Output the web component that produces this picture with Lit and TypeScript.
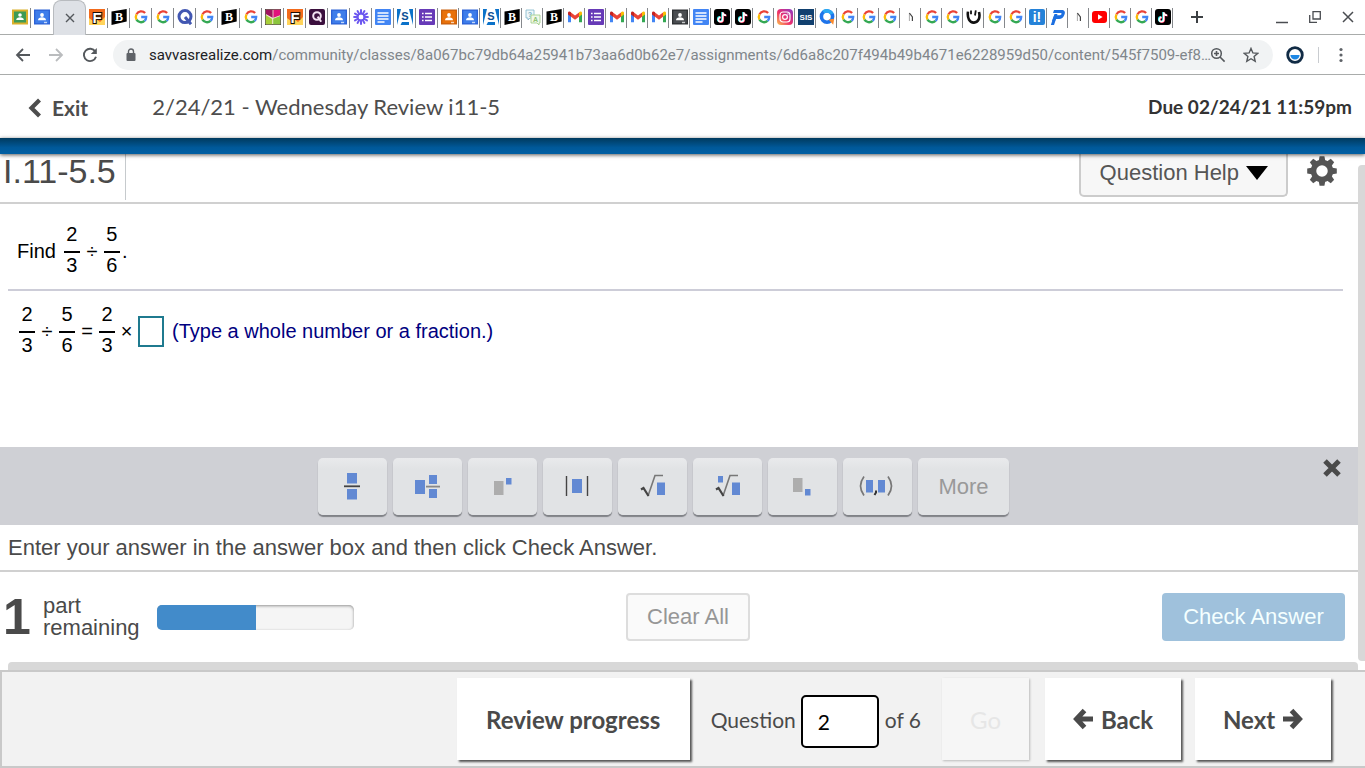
import { LitElement, html, css, svg } from "lit";
import { customElement, state } from "lit/decorators.js";
import { classMap } from "lit/directives/class-map.js";

const classroom = (frame: string, fill: string) => svg`
  <rect width="16" height="15" y=".5" fill=${frame}/>
  <rect x="1.3" y="1.8" width="13.4" height="12.4" fill=${fill}/>
  <circle cx="8" cy="6" r="1.9" fill="#fff"/>
  <path d="M4 11.2c0-2 2-2.9 4-2.9s4 .9 4 2.9z" fill="#fff"/>
  <rect x="10" y="12.8" width="3" height="1.4" fill="#fff" opacity=".7"/>`;

const ICONS: Record<string, unknown> = {
  classroom: svg`<rect width="16" height="15" y=".5" fill="#d9b02b"/><rect x="2" y="2.5" width="12" height="11" fill="#3f9a55"/>
    <circle cx="8" cy="6" r="1.8" fill="#fff"/><path d="M4.2 11c0-2 1.8-2.8 3.8-2.8s3.8.8 3.8 2.8z" fill="#fff"/>`,
  people: classroom("#2c62d6", "#3e7dea"),
  orange: classroom("#c9600c", "#e8710a"),
  dark: classroom("#2e3134", "#4a4d51"),
  flame: svg`<rect width="16" height="16" fill="#f26a1b"/><path d="M0 16V9l4 3 3-2 4 3 5-5v8z" fill="#ffd35a"/>
    <text x="8" y="13.5" class="glyph" text-anchor="middle" font-size="15" fill="#fff" stroke="#1b0d05" stroke-width="2" paint-order="stroke">F</text>`,
  brain: svg`<path d="M.5 2.6 15.7 0v12.6L.5 16z" fill="#000"/>
    <text x="8" y="12" class="serif" text-anchor="middle" font-size="12" fill="#fff">B</text>`,
  google: svg`<g fill="none" stroke-width="2.3">
    <path d="M12.1 4A5.2 5.2 0 0 0 3.5 5.4" stroke="#ea4335"/>
    <path d="M3.5 5.4a5.2 5.2 0 0 0 0 5.2" stroke="#fbbc05"/>
    <path d="M3.5 10.6a5.2 5.2 0 0 0 8 1.3" stroke="#34a853"/>
    <path d="M11.5 11.9A5.2 5.2 0 0 0 13.2 8H8.2" stroke="#4285f4"/></g>`,
  quizlet: svg`<circle cx="8" cy="7.6" r="6" fill="none" stroke="#4257b2" stroke-width="3"/><path d="m8 8 6 7.2" stroke="#4257b2" stroke-width="3"/>`,
  nearpod: svg`<rect width="16" height="16" fill="#4a4436"/><rect x=".8" y=".8" width="14.4" height="14.4" fill="#f3ead8"/><path d="M.8.8h6.8v8L.8 5z" fill="#a01560"/><path d="M8.400.8h6.800v5.400L8.400 8.800z" fill="#e2127c"/><path d="m.8 6 6.400 4v5.200H.8z" fill="#a8cf3a"/><path d="m8.200 9.800 7-2.800v8.200h-7z" fill="#8cc63e"/>`,
  quizizz: svg`<rect width="16" height="16" rx="2" fill="#3b0f3d"/><circle cx="8" cy="7" r="3.8" fill="none" stroke="#f3e3f2" stroke-width="2"/><path d="m8.6 7.6 3.6 5.2" stroke="#f3e3f2" stroke-width="2"/>`,
  burst: svg`<g stroke="#6d58f0" stroke-width="2" stroke-linecap="round">${[0, 30, 60, 90, 120, 150, 180, 210, 240, 270, 300, 330].map(
    (a) => svg`<path d="M8 4.6V1.1" transform="rotate(${a} 8 8)"/>`)}</g><circle cx="8" cy="8" r="3.2" fill="none" stroke="#6d58f0" stroke-width="1.4"/>`,
  docs: svg`<rect width="16" height="16" rx="1" fill="#4285f4"/><path d="M2.5 4h11M2.5 7h11M2.5 10h11M2.5 13h7" stroke="#fff" stroke-width="1.4"/>`,
  savvas: svg`<rect width="16" height="16" fill="#0b72c9"/><path d="M4 0h8l4 16h-4v-3H5l-1.5 3H0z" fill="#fff"/>
    <text x="8" y="11.4" class="glyph" text-anchor="middle" font-size="11" fill="#0a4f96">S</text>`,
  forms: svg`<rect width="16" height="16" rx="1" fill="#673ab7"/><path d="M3 4.5h1.6M3 8h1.6M3 11.5h1.6M6 4.5h7M6 8h7M6 11.5h7" stroke="#fff" stroke-width="1.5"/>`,
  talk: svg`<path d="M1 1h8v8H5l-2 2V9H1z" fill="#eef7fa" stroke="#7fb5c9" stroke-width=".8"/><path d="M6 6h9v8h-1v2l-2-2H6z" fill="#f0f8ea" stroke="#9ccc84" stroke-width=".8"/>
    <text x="5" y="7.6" class="glyph" text-anchor="middle" font-size="7" fill="#79b2c6">?</text><text x="10.6" y="13" class="glyph" text-anchor="middle" font-size="7" fill="#8fc274">A</text>`,
  gmail: svg`<path d="M1 4v9.3h3V7z" fill="#4285f4"/><path d="M15 4v9.3h-3V7z" fill="#34a853"/><path d="M4 3.4v4.4l4 3 4-3V3.4l-4 3z" fill="#ea4335"/><path d="M1 4c0-1.8 1.8-2 3-.8v4.6L1 5.6z" fill="#c5221f"/><path d="M15 4c0-1.8-1.8-2-3-.8v4.6l3-2.2z" fill="#fbbc04"/>`,
  tiktok: svg`<rect width="16" height="16" rx="3" fill="#000"/><g fill="none" stroke-width="1.8"><path d="M8.2 3v7.2a2.2 2.2 0 1 1-2.2-2.2M8.2 3c.2 1.8 1.6 3 3.4 3" stroke="#25f4ee"/><path d="M9.2 3.6v7.2a2.2 2.2 0 1 1-2.2-2.2M9.2 3.6c.2 1.8 1.6 3 3.4 3" stroke="#fe2c55"/><path d="M8.7 3.3v7.2a2.2 2.2 0 1 1-2.2-2.2M8.7 3.3c.2 1.8 1.6 3 3.4 3" stroke="#fff" stroke-width="1.6"/></g>`,
  instagram: svg`<defs><linearGradient id="ig" x1="0" y1="1" x2="1" y2="0"><stop offset="0" stop-color="#fdc44f"/><stop offset=".45" stop-color="#ee2f6b"/><stop offset="1" stop-color="#8a3ac8"/></linearGradient></defs>
    <rect width="16" height="16" rx="4" fill="url(#ig)"/><rect x="3" y="3" width="10" height="10" rx="3" fill="none" stroke="#fff" stroke-width="1.2"/><circle cx="8" cy="8" r="2.4" fill="none" stroke="#fff" stroke-width="1.2"/><circle cx="11" cy="5" r=".7" fill="#fff"/>`,
  sis: svg`<rect width="16" height="16" fill="#11406f"/><text x="8" y="10.8" class="glyph" text-anchor="middle" font-size="8" fill="#fff">SIS</text>`,
  lens: svg`<circle cx="8" cy="7.6" r="5.6" fill="none" stroke="#1e74ea" stroke-width="3.6"/><path d="M4.4 3A5.6 5.6 0 0 1 13 5" fill="none" stroke="#2aa8f2" stroke-width="3.6"/><path d="m9.6 10.4 5.6-.6-1 6z" fill="#fb8a2c"/>`,
  note: svg`<path d="M6.400 4v8" stroke="#aaa" stroke-width="1"/><path d="m6.400 4 3 4v4" fill="none" stroke="#444" stroke-width="1.2"/>`,
  face: svg`<path d="M2 2.6C1 9 3.6 13.8 8 13.6c4.6-.2 6.4-5 5-10.6" fill="none" stroke="#111" stroke-width="2.6"/><path d="M5 1.6v3.6M9.8 1.4 9 6.5" fill="none" stroke="#111" stroke-width="1.8"/>`,
  iready: svg`<rect width="16" height="16" rx="2" fill="#2582d8"/><text x="8" y="13" class="glyph" text-anchor="middle" font-size="14" fill="#fff">i!</text>`,
  paypal: svg`<path d="M4 1h7.5c3 0 4 2 3 4.5-1 3.2-3 4.5-5.5 4.5H6l-2 6H.8L4.2 6.2H10c.8 0 1.3-.6 1.5-1.2.2-.7-.3-1-.9-1H3z" fill="#1c6fe0"/><path d="M4.5 5h3L5 12H2z" fill="#1c6fe0"/>`,
  youtube: svg`<rect x="0" y="2" width="15" height="12" rx="3" fill="#f00"/><path d="M6 5.2v5.6L10.6 8z" fill="#fff"/>`,
};

const LEADING = ["classroom", "people"];
const WIDE = "flame brain google google quizlet google brain google nearpod flame quizizz people burst docs savvas forms".split(" ");
const NARROW = ("orange people savvas brain talk brain gmail forms gmail gmail gmail dark docs tiktok tiktok google instagram sis lens " +
  "google google google note google google face google google iready paypal note youtube google google tiktok").split(" ");

@customElement("browser-chrome")
class BrowserChrome extends LitElement {
  static styles = css`
    :host { display: block; font-family: Roboto, "Liberation Sans", sans-serif; }
    button { border: 0; padding: 0; background: none; color: inherit; font: inherit; display: grid; place-items: center; flex: none; }
    svg { display: block; }
    .strip { display: flex; height: 34px; padding-left: 9px; border-bottom: 1px solid #a9acab; background: #fff; }
    .tab { width: 22px; height: 34px; position: relative; }
    .tab::after { content: ""; position: absolute; right: 0; top: 8px; bottom: 6px; width: 1px; background: #85888c; }
    .tab.narrow { width: 21px; }
    .tab.bare::after { content: none; }
    .current { width: 33px; height: 35px; background: #dee1e6; border-radius: 8px 8px 0 0; border: 1px solid #b8bbbf; border-bottom: 0; }
    .add { width: 48px; }
    .window { display: flex; margin-left: auto; padding-right: 8px; gap: 15px; }
    .window button { width: 18px; }
    .glyph { font-family: "Liberation Sans", sans-serif; font-weight: 700; }
    .serif { font-family: "Liberation Serif", serif; font-weight: 700; }
    .bar { display: flex; align-items: center; height: 39px; border-bottom: 1px solid #a9acab; padding: 0 15px; color: #5f6368; }
    .nav { display: flex; gap: 17px; margin-right: 14px; }
    .omni { display: flex; align-items: center; flex: 1; min-width: 0; height: 30px; border-radius: 15px; background: #f1f3f4; padding: 0 14px 0 12px; }
    .url { flex: 1; min-width: 0; white-space: nowrap; margin-left: 12px; font-size: 15px; line-height: 30px; color: #80868b; }
    .host { color: #202124; }
    .star { margin-left: 17px; }
    .ext { margin-left: 13px; }
    .rule { width: 1px; height: 16px; background: #c9ccd0; margin: 0 13px 0 14px; }
  `;

  private tab(name: string, narrow = false, bare = false) {
    return html`<button class=${classMap({ tab: true, narrow, bare })} aria-label=${name}>
      <svg width="16" height="16" viewBox="0 0 16 16">${ICONS[name]}</svg></button>`;
  }

  render() {
    return html`
      <div class="strip">
        ${LEADING.map((n, i) => this.tab(n, false, i === 1))}
        <button class="current" aria-label="Close tab"><svg width="10" height="10" viewBox="0 0 10 10"><path d="m1 1 8 8M9 1 1 9" stroke="#54585c" stroke-width="1.4"/></svg></button>
        ${WIDE.map((n) => this.tab(n))}
        ${NARROW.map((n) => this.tab(n, true))}
        <button class="add" aria-label="New tab"><svg width="14" height="14" viewBox="0 0 14 14"><path d="M7 1v12M1 7h12" stroke="#3c4043" stroke-width="2"/></svg></button>
        <div class="window">
          <button aria-label="Minimize"><svg width="12" height="14" viewBox="0 0 12 14"><path d="M0 12.5h12" stroke="#4a4d51" stroke-width="1.5"/></svg></button>
          <button aria-label="Restore"><svg width="12" height="12" viewBox="0 0 12 12"><path d="M4 .7h7.3v7.3H4zM.7 4v7.3H8" fill="none" stroke="#4a4d51" stroke-width="1.3"/></svg></button>
          <button aria-label="Close window"><svg width="12" height="12" viewBox="0 0 12 12"><path d="m1 1 10 10M11 1 1 11" stroke="#4a4d51" stroke-width="1.5"/></svg></button>
        </div>
      </div>
      <div class="bar">
        <div class="nav">
          <button aria-label="Back"><svg width="16" height="16" viewBox="0 0 16 16"><path d="M15 8H2.5M8 2 2 8l6 6" fill="none" stroke="#54585c" stroke-width="1.8"/></svg></button>
          <button aria-label="Forward" disabled><svg width="16" height="16" viewBox="0 0 16 16"><path d="M1 8h12.5M8 2l6 6-6 6" fill="none" stroke="#babcbe" stroke-width="1.8"/></svg></button>
          <button aria-label="Reload"><svg width="18" height="16" viewBox="0 0 18 16"><path d="M14.3 4.5A6.2 6.2 0 1 0 15 9.8" fill="none" stroke="#54585c" stroke-width="1.9"/><path d="M15.8 1v6H9.8z" fill="#54585c"/></svg></button>
        </div>
        <div class="omni">
          <svg width="12" height="14" viewBox="0 0 12 14"><rect x="1.5" y="5" width="9" height="8" rx="1" fill="#5f6368"/><path d="M3.5 5V3.5a2.5 2.5 0 0 1 5 0V5" fill="none" stroke="#5f6368" stroke-width="1.4"/></svg>
          <div class="url"><span class="host">savvasrealize.com</span>/community/classes/8a067bc79db64a25941b73aa6d0b62e7/assignments/6d6a8c207f494b49b4671e6228959d50/content/545f7509-ef8…</div>
          <button aria-label="Zoom"><svg width="16" height="16" viewBox="0 0 16 16"><circle cx="6.5" cy="6.5" r="4.8" fill="none" stroke="#54585c" stroke-width="1.5"/><path d="m10 10 4.6 4.6M4 6.5h5M6.5 4v5" stroke="#54585c" stroke-width="1.6"/></svg></button>
          <button class="star" aria-label="Bookmark"><svg width="16" height="16" viewBox="0 0 16 16"><path d="m8 1.4 1.9 4.5 4.9.4-3.7 3.2 1.1 4.8L8 11.7l-4.2 2.6 1.1-4.8-3.7-3.2 4.9-.4z" fill="none" stroke="#54585c" stroke-width="1.4"/></svg></button>
        </div>
        <button class="ext" aria-label="Extension"><svg width="18" height="18" viewBox="0 0 18 18"><circle cx="9" cy="9" r="7.3" fill="#fff" stroke="#112b45" stroke-width="2.8"/><path d="M4.4 9h9.2a4.6 4.6 0 0 1-9.2 0z" fill="#1e88e5"/></svg></button>
        <div class="rule"></div>
        <button aria-label="Menu"><svg width="18" height="16" viewBox="0 0 18 16"><g fill="#5f6368"><circle cx="9" cy="2.5" r="1.6"/><circle cx="9" cy="8" r="1.6"/><circle cx="9" cy="13.5" r="1.6"/></g></svg></button>
      </div>`;
  }
}

const BLUE = "#6289d3";
const TOOLS: [string, unknown][] = [
  ["Fraction", svg`<path d="M15 2h10v10.5H15zM15 18h10v10.5H15z" fill=${BLUE}/><path d="M12 15.3h16" stroke="#444" stroke-width="1.8"/>`],
  ["Mixed number", svg`<path d="M8 9h10v14H8zM22 4h8v9h-8zM22 18h8v9h-8z" fill=${BLUE}/><path d="M19 15.6h14" stroke="#888" stroke-width="1.8"/>`],
  ["Exponent", svg`<path d="M12 10h9.5v14H12z" fill="#adadad"/><path d="M24 7h5.5v6.5H24z" fill=${BLUE}/>`],
  ["Absolute value", svg`<path d="M15 8h10v14H15z" fill=${BLUE}/><path d="M9.5 5v20M30.5 5v20" stroke="#444" stroke-width="1.4"/>`],
  ["Square root", svg`<path d="M25 11.5h8v12.5h-8z" fill=${BLUE}/><path d="M16 25 23 4.5h8" fill="none" stroke="#777" stroke-width="1.6"/><path d="m9 18.5 2.5-1.5L16.5 25" fill="none" stroke="#444" stroke-width="2.2"/>`],
  ["Root", svg`<path d="M25 11.5h8v12.5h-8zM11 5h5v6.5h-5z" fill=${BLUE}/><path d="M16 25 23 4.5h8" fill="none" stroke="#777" stroke-width="1.6"/><path d="m9 18.5 2.5-1.5L16.5 25" fill="none" stroke="#444" stroke-width="2.2"/>`],
  ["Subscript", svg`<path d="M11 7h9.5v14H11z" fill="#adadad"/><path d="M23 18h5.5v6.5H23z" fill=${BLUE}/>`],
  ["Ordered pair", svg`<path d="M9 9h7v12.500H9zM21 9h7v12.500h-7z" fill=${BLUE}/><path d="M7 5.500q-7 9.500 0 19M31 5.500q7 9.500 0 19" fill="none" stroke="#777" stroke-width="1.7"/><path d="M19 19.500v2L17.500 24" fill="none" stroke="#333" stroke-width="2"/>`],
];

@customElement("app-root")
class AppRoot extends LitElement {
  @state() private done = 50;

  static styles = css`
    :host { display: flex; flex-direction: column; min-height: 100vh; background: #fff; color: #4a4a4a; font-family: "Liberation Sans", Arial, sans-serif; }
    * { box-sizing: border-box; }
    button { font: inherit; color: inherit; margin: 0; padding: 0; border: 0; background: none; }
    svg { display: block; }
    .head { display: flex; align-items: center; height: 63px; padding: 0 13px 0 28px; font-family: Lato, sans-serif; color: #4d4d4d; background: #fff; }
    .exit { display: flex; align-items: center; gap: 9px; color: inherit; text-decoration: none; font-size: 21px; line-height: 26px; padding-top: 2px; font-weight: 700; margin-right: 64px; }
    .title { flex: 1; margin: 0; font-size: 22px; font-weight: 400; }
    .due { font-size: 19px; font-weight: 700; color: #333; }
    .band { height: 16px; background: linear-gradient(#003a5e, #00599a 60%, #005fa3); box-shadow: 0 1px 4px #000a; position: relative; }
    .body { flex: 1; display: flex; }
    .main { flex: 1; min-width: 0; display: flex; flex-direction: column; }
    .vscroll { width: 7px; margin: 11px 0 9px; background: #d8d8d8; border-radius: 4px 0 0 4px; }
    .lesson { display: flex; height: 50px; border-bottom: 2px solid #d0d0d0; padding-right: 20px; }
    .lesson h2 { margin: 0 0 2px; padding: 0 9px 0 3px; border-right: 1px solid #c6cacd; font-size: 34px; line-height: 34px; font-weight: 400; }
    .help { margin-left: auto; height: 43px; padding: 0 18px 3px 19px; display: flex; align-items: center; gap: 7px; font-size: 22px; color: #555; background: #f7f7f7; border: 2px solid #ccc; border-top: 0; border-radius: 0 0 5px 5px; }
    .gear { align-self: flex-start; margin: 1px 0 0 18px; }
    .work { flex: 1; padding: 19px 15px 0 8px; font-size: 20px; color: #000; }
    .row { display: flex; align-items: center; height: 56px; padding-left: 9px; white-space: pre; }
    .ask { height: 68px; padding-bottom: 10px; border-bottom: 2px solid #cdcdd8; }
    .solve { margin-top: 12px; padding-left: 11px; }
    .frac { display: flex; flex-direction: column; width: 16px; margin-bottom: 3px; text-align: center; line-height: 20px; }
    .frac span:first-child { border-bottom: 2px solid #000; padding-bottom: 7px; }
    .frac span:last-child { line-height: 22px; padding-top: 1px; }
    .op { width: 24px; text-align: center; }
    .dot { margin-left: 2px; }
    .find { margin-right: 8px; }
    .times { width: 23px; }
    .answer { width: 26px; height: 31px; border: 2px solid #1f7a8f; background: #fff; margin-right: 8px; padding: 0 2px; font: inherit; }
    .hint { color: #000080; }
    .palette { display: flex; align-items: flex-start; height: 78px; padding: 11px 16px 0 5px; background: #cfd0d5; }
    .tools { flex: 1; display: flex; justify-content: center; gap: 6px; }
    .tool { width: 69px; height: 57px; padding: 0 2px 2px 0; border-radius: 5px; background: linear-gradient(#e9eaec, #e1e3e5 20%); box-shadow: 0 2px 1px #808287; display: grid; place-items: center; }
    .more { width: 91px; padding: 0; font-size: 22px; color: #999; }
    .note { margin: 0; height: 47px; padding: 0 8px; line-height: 45px; font-size: 22px; border-bottom: 2px solid #d0d0d0; }
    .status { display: grid; grid-template-columns: 1fr auto 1fr; align-items: center; height: 90px; padding: 0 13px 0 3px; }
    .left { display: flex; align-items: center; }
    .count { font-size: 50px; font-weight: 700; line-height: 50px; width: 40px; }
    .parts { display: flex; flex-direction: column; font-size: 22px; line-height: 22px; width: 114px; }
    .meter { width: 197px; height: 25px; border-radius: 5px; background: #f5f5f5; box-shadow: inset 0 1px 3px #0006; overflow: hidden; }
    .fill { height: 100%; background: #428bca; }
    .clear { width: 124px; height: 48px; margin-left: 28px; border: 2px solid #ddd; border-radius: 4px; background: #fafafa; color: #969696; font-size: 22px; }
    .check { justify-self: end; width: 183px; height: 48px; border-radius: 4px; background: #9fc1dc; color: #f4ffff; font-size: 22px; }
    .hscroll { height: 8px; margin-left: 8px; background: #d8d8d8; border-radius: 4px 4px 0 0; }
    .foot { display: flex; align-items: center; justify-content: flex-end; height: 98px; padding-right: 34px; border: 2px solid #c9c9c9; border-right: 0; background: #f2f2f2; font-family: Lato, sans-serif; font-size: 21px; }
    .card { height: 82px; display: flex; align-items: center; justify-content: center; gap: 6px; background: #fff; box-shadow: 2px 2px 2px #555; font-weight: 700; font-size: 24px; width: 136px; }
    .review { width: 233px; margin-right: 21px; }
    .go { width: 87px; margin: 0 16px 0 21px; background: #f6f6f6; color: #e6e6e6; box-shadow: 1px 1px 2px #bbb; font-weight: 400; }
    .back { margin-right: 14px; }
    .page { width: 78px; height: 53px; margin: 5px 6px 0 5px; padding: 0 15px; border: 2px solid #000; border-radius: 5px; background: #fff; color: #000; font: inherit; }
  `;

  private frac(a: string, b: string) {
    return html`<span class="frac"><span>${a}</span><span>${b}</span></span>`;
  }

  render() {
    return html`
      <browser-chrome></browser-chrome>
      <header class="head">
        <a class="exit" href="#"><svg width="15" height="20" viewBox="0 0 15 20"><path d="M11.5 2 3.5 10l8 8" fill="none" stroke="#4d4d4d" stroke-width="4.2"/></svg>Exit</a>
        <h1 class="title">2/24/21 - Wednesday Review i11-5</h1>
        <div class="due">Due 02/24/21 11:59pm</div>
      </header>
      <div class="band"></div>
      <div class="body">
        <main class="main">
          <div class="lesson">
            <h2>I.11-5.5</h2>
            <button class="help">Question Help<svg width="22" height="14" viewBox="0 0 22 14"><path d="M0 0h22L11 14z" fill="#000"/></svg></button>
            <button class="gear" aria-label="Settings"><svg width="32" height="32" viewBox="0 0 32 32"><g fill="#555">${[0, 45, 90, 135, 180, 225, 270, 315].map(
              (a) => svg`<path d="M12.5 7 13.6 1.2h4.8L19.5 7z" transform="rotate(${a} 16 16)"/>`)}</g><circle cx="16" cy="16" r="8.5" fill="none" stroke="#555" stroke-width="5.5"/></svg></button>
          </div>
          <section class="work">
            <div class="row ask"><span class="find">Find</span>${this.frac("2", "3")}<span class="op">÷</span>${this.frac("5", "6")}<span class="dot">.</span></div>
            <div class="row solve">${this.frac("2", "3")}<span class="op">÷</span>${this.frac("5", "6")}<span class="op">=</span>${this.frac("2", "3")}<span class="op times">×</span><input class="answer" aria-label="Answer"><span class="hint">(Type a whole number or a fraction.)</span></div>
          </section>
          <div class="palette">
            <div class="tools">
              ${TOOLS.map(([label, art]) => html`<button class="tool" aria-label=${label}><svg width="40" height="30" viewBox="0 0 40 30">${art}</svg></button>`)}
              <button class="tool more">More</button>
            </div>
            <button aria-label="Close palette"><svg width="20" height="20" viewBox="0 0 20 20"><path d="m3 3 14 14M17 3 3 17" stroke="#4a4a4a" stroke-width="5"/></svg></button>
          </div>
          <p class="note">Enter your answer in the answer box and then click Check Answer.</p>
          <div class="status">
            <div class="left">
              <span class="count">1</span><span class="parts"><span>part</span><span>remaining</span></span>
              <div class="meter" role="progressbar" aria-label="Parts done" aria-valuenow=${this.done}><div class="fill" style="width:${this.done}%"></div></div>
            </div>
            <button class="clear">Clear All</button>
            <button class="check">Check Answer</button>
          </div>
          <div class="hscroll"></div>
        </main>
        <div class="vscroll"></div>
      </div>
      <footer class="foot">
        <button class="card review">Review progress</button>
        <label for="page">Question</label>
        <input class="page" id="page" .value=${"2"}>
        <span>of 6</span>
        <button class="card go" disabled>Go</button>
        <button class="card back"><svg width="22" height="22" viewBox="0 0 22 22"><path d="M20 11H5M11.5 2.5 3.5 11l8 8.5" fill="none" stroke="#4a4a4a" stroke-width="5"/></svg>Back</button>
        <button class="card">Next<svg width="22" height="22" viewBox="0 0 22 22"><path d="M2 11h15M10.5 2.5l8 8.5-8 8.5" fill="none" stroke="#4a4a4a" stroke-width="5"/></svg></button>
      </footer>`;
  }
}
